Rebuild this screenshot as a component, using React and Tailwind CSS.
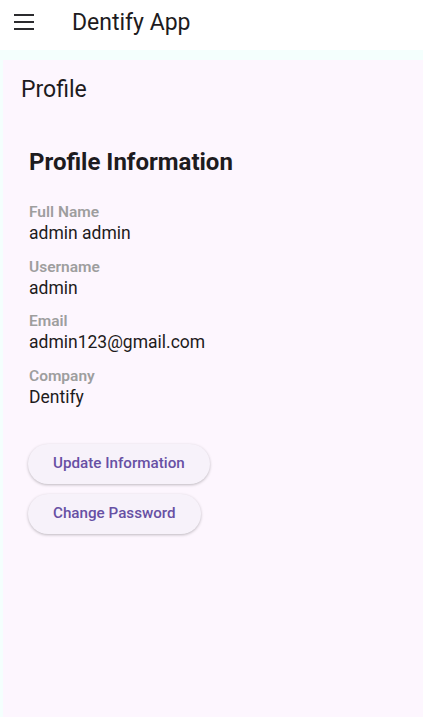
export default function App() {
  const fields = [
    { label: "Full Name", value: "admin admin" },
    { label: "Username", value: "admin" },
    { label: "Email", value: "admin123@gmail.com" },
    { label: "Company", value: "Dentify" },
  ];

  return (
    <div className="h-[717px] flex flex-col bg-[#f4fffd] font-['Roboto',sans-serif] text-[#1d1b20] overflow-hidden">
      {/* App bar */}
      <header className="h-[50px] shrink-0 bg-white flex items-start">
        <button className="w-[48px] pl-[14px] mt-[14px] flex">
          <svg width="20" height="16" viewBox="0 0 20 16">
            <rect x="0" y="0" width="20" height="2" fill="#2b2b2e" />
            <rect x="0" y="7" width="20" height="2" fill="#2b2b2e" />
            <rect x="0" y="14" width="20" height="2" fill="#2b2b2e" />
          </svg>
        </button>
        <h1 className="ml-[24px] mt-[8px] text-[23px] leading-[30px]">Dentify App</h1>
      </header>

      {/* Body */}
      <div className="flex-1 mt-[10px] ml-[3px] bg-[#fdf6fe]">
        <h2 className="px-[18px] pt-[16px] text-[23px] leading-[28px]">Profile</h2>

        <div className="px-[26px] pt-[42px]">
          <h3 className="text-[24px] font-bold leading-[32px]">Profile Information</h3>

          <div className="mt-[24px] flex flex-col gap-[11.5px]">
            {fields.map((f) => (
              <div key={f.label}>
                <div className="text-[15.5px] font-semibold text-[#9e9e9e] leading-[20px]">
                  {f.label}
                </div>
                <div className="text-[17.5px] leading-[23px]">{f.value}</div>
              </div>
            ))}
          </div>

          <div className="mt-[35px] -ml-[1px] flex flex-col items-start gap-[10px]">
            <button className="h-[40px] px-[25px] rounded-full bg-[#f7f2fa] text-[#6750a4] text-[15.2px] font-medium shadow-[0_1px_3px_rgba(0,0,0,0.25)]">
              Update Information
            </button>
            <button className="h-[40px] px-[25px] rounded-full bg-[#f7f2fa] text-[#6750a4] text-[15.2px] font-medium shadow-[0_1px_3px_rgba(0,0,0,0.25)]">
              Change Password
            </button>
          </div>
        </div>
      </div>
    </div>
  );
}
